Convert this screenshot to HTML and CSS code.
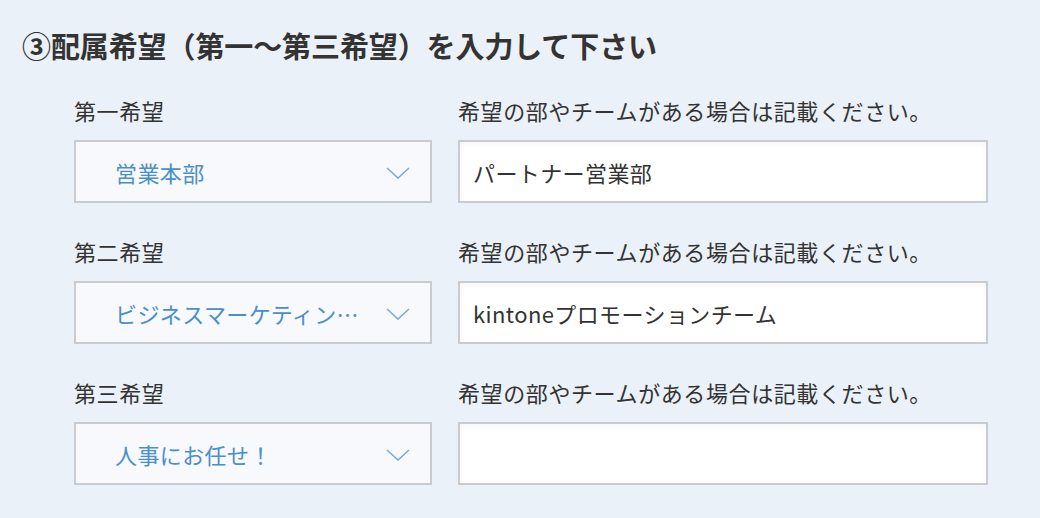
FILE: index.html
```html
<!DOCTYPE html>
<html lang="ja">
<head>
<meta charset="utf-8">
<link rel="stylesheet" href="styles.css">
</head>
<body>
<main class="page">
  <h2 class="heading">③配属希望（第一〜第三希望）を入力して下さい</h2>
  <div class="form">
    <div class="field">
      <div class="label">第一希望</div>
      <div class="select"><span class="select-text">営業本部</span><svg class="chev" width="24" height="12" viewBox="0 0 24 12"><path d="M1 1 L12 11 L23 1" fill="none" stroke="#7eaad6" stroke-width="1.6"/></svg></div>
    </div>
    <div class="field">
      <div class="label">希望の部やチームがある場合は記載ください。</div>
      <div class="input">パートナー営業部</div>
    </div>
    <div class="field">
      <div class="label">第二希望</div>
      <div class="select"><span class="select-text">ビジネスマーケティン…</span><svg class="chev" width="24" height="12" viewBox="0 0 24 12"><path d="M1 1 L12 11 L23 1" fill="none" stroke="#7eaad6" stroke-width="1.6"/></svg></div>
    </div>
    <div class="field">
      <div class="label">希望の部やチームがある場合は記載ください。</div>
      <div class="input">kintoneプロモーションチーム</div>
    </div>
    <div class="field">
      <div class="label">第三希望</div>
      <div class="select"><span class="select-text">人事にお任せ！</span><svg class="chev" width="24" height="12" viewBox="0 0 24 12"><path d="M1 1 L12 11 L23 1" fill="none" stroke="#7eaad6" stroke-width="1.6"/></svg></div>
    </div>
    <div class="field">
      <div class="label">希望の部やチームがある場合は記載ください。</div>
      <div class="input"></div>
    </div>
  </div>
</main>
</body>
</html>
```
FILE: styles.css
```css
* { box-sizing: border-box; }
html, body { margin: 0; padding: 0; }
body {
  background: #eaf1f8;
  font-family: "Noto Sans CJK JP", "Noto Sans", sans-serif;
  color: #333;
  width: 1040px;
  height: 518px;
  overflow: hidden;
}
.page {
  padding: 25px 0 0 22px;
}
.heading {
  margin: 0;
  font-size: 29px;
  line-height: 40px;
  font-weight: 700;
  color: #333;
  letter-spacing: -0.1px;
}
.form {
  display: grid;
  grid-template-columns: 358px 530px;
  column-gap: 26px;
  row-gap: 33px;
  margin: 30px 0 0 52px;
}
.field {
  display: flex;
  flex-direction: column;
}
.label {
  font-size: 22px;
  line-height: 30px;
  margin-bottom: 15px;
  color: #333;
  white-space: nowrap;
  letter-spacing: 0.6px;
}
.select {
  height: 63px;
  border: 2px solid #c8ccd1;
  background: #f7f9fc;
  display: flex;
  align-items: center;
  justify-content: space-between;
  padding: 0 20px 0 39px;
}
.select-text {
  font-size: 22px;
  color: #4a8fcb;
  white-space: nowrap;
  letter-spacing: 0.4px;
}
.chev { display: block; margin-top: 3px; }
.input {
  height: 63px;
  border: 2px solid #c8ccd1;
  background: #fff;
  box-shadow: inset 0 2px 6px rgba(0,0,0,0.04);
  display: flex;
  align-items: center;
  padding: 0 13px;
  font-size: 22px;
  color: #333;
  white-space: nowrap;
  letter-spacing: 0.4px;
}
```
